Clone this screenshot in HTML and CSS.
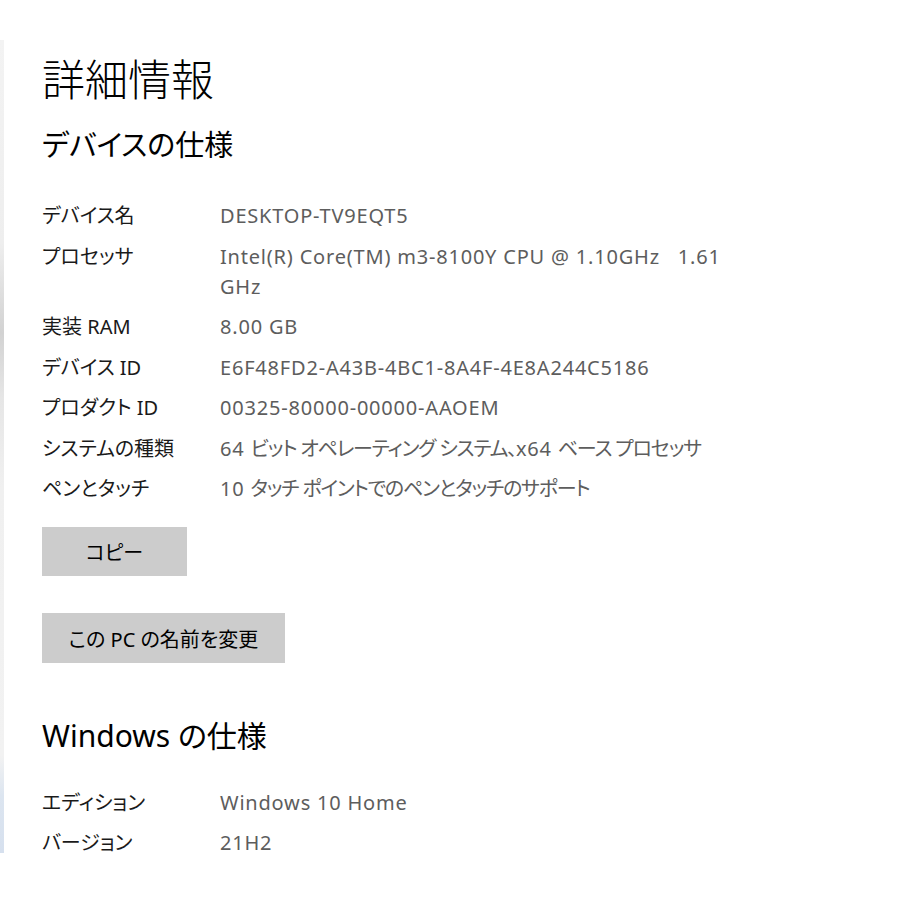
FILE: index.html
```html
<!DOCTYPE html>
<html lang="ja">
<head>
<meta charset="utf-8">
<title>詳細情報</title>
<link rel="stylesheet" href="styles.css">
</head>
<body>
<div class="window">
  <div class="edge"></div>
  <main class="content">
    <h1 class="title">詳細情報</h1>
    <h2 class="subtitle">デバイスの仕様</h2>
    <dl class="specs">
      <div class="row"><dt>デバイス名</dt><dd>DESKTOP-TV9EQT5</dd></div>
      <div class="row"><dt>プロセッサ</dt><dd>Intel(R) Core(TM) m3-8100Y CPU @ 1.10GHz&nbsp;&nbsp; 1.61<br>GHz</dd></div>
      <div class="row"><dt>実装 RAM</dt><dd>8.00 GB</dd></div>
      <div class="row"><dt>デバイス ID</dt><dd>E6F48FD2-A43B-4BC1-8A4F-4E8A244C5186</dd></div>
      <div class="row"><dt>プロダクト ID</dt><dd>00325-80000-00000-AAOEM</dd></div>
      <div class="row"><dt>システムの種類</dt><dd>64 <span class="ja">ビット オペレーティング システム、</span>x64 <span class="ja">ベース プロセッサ</span></dd></div>
      <div class="row"><dt>ペンとタッチ</dt><dd>10 <span class="ja">タッチ ポイントでのペンとタッチのサポート</span></dd></div>
    </dl>
    <div class="actions">
      <button class="btn btn-copy">コピー</button>
      <button class="btn btn-rename">この PC の名前を変更</button>
    </div>
    <h2 class="subtitle win">Windows の仕様</h2>
    <dl class="specs win-specs">
      <div class="row"><dt>エディション</dt><dd>Windows 10 Home</dd></div>
      <div class="row"><dt>バージョン</dt><dd>21H2</dd></div>
    </dl>
  </main>
</div>
</body>
</html>
```
FILE: styles.css
```css
html, body {
  margin: 0;
  padding: 0;
  background: #ffffff;
}
body {
  font-family: "Noto Sans", "Noto Sans CJK JP", sans-serif;
  font-feature-settings: "palt";
  color: #000000;
}
.window {
  display: flex;
  align-items: flex-start;
  height: 900px;
}
.edge {
  width: 4px;
  height: 813px;
  margin-top: 40px;
  background: linear-gradient(to bottom,
    #f3f3f3 0%, #eeeeee 25%, #d2d2d2 36%, #e6e6e6 44%,
    #f0f0f0 55%, #f2f2f2 88%, #dce5f0 93%, #d6e0ee 100%);
}
.content {
  padding-left: 38px;
  flex: 1;
}
.title {
  font-family: "Noto Sans CJK JP", sans-serif;
  font-weight: 300;
  font-size: 43px;
  line-height: 56px;
  margin: 49px 0 0 0;
}
.subtitle {
  font-family: "Noto Sans", "Noto Sans CJK JP", sans-serif;
  font-weight: 400;
  font-size: 29px;
  line-height: 40px;
  margin: 20px 0 0 0;
}
.specs {
  margin: 36px 0 0 0;
}
.row {
  display: flex;
  margin-bottom: 10.5px;
  font-size: 20px;
  line-height: 30px;
}
.row dt {
  width: 178px;
  flex: none;
  color: #1a1a1a;
}
.row dd {
  margin: 0;
  color: #5d5d5d;
  letter-spacing: 0.8px;
}
.row dd .ja {
  letter-spacing: -1.2px;
}
.actions {
  display: flex;
  flex-direction: column;
  align-items: flex-start;
  gap: 37px;
  margin-top: 23px;
}
.btn {
  font-family: "Noto Sans", "Noto Sans CJK JP", sans-serif;
  font-feature-settings: "palt";
  font-size: 20px;
  color: #000000;
  background: #cccccc;
  border: none;
  height: 49px;
  padding: 0 21px;
  cursor: pointer;
}
.btn-copy {
  width: 145px;
}
.btn-rename {
  width: 243px;
  height: 50px;
}
.subtitle.win {
  font-size: 30px;
  margin-top: 53px;
}
.specs.win-specs {
  margin-top: 31.5px;
}
```
